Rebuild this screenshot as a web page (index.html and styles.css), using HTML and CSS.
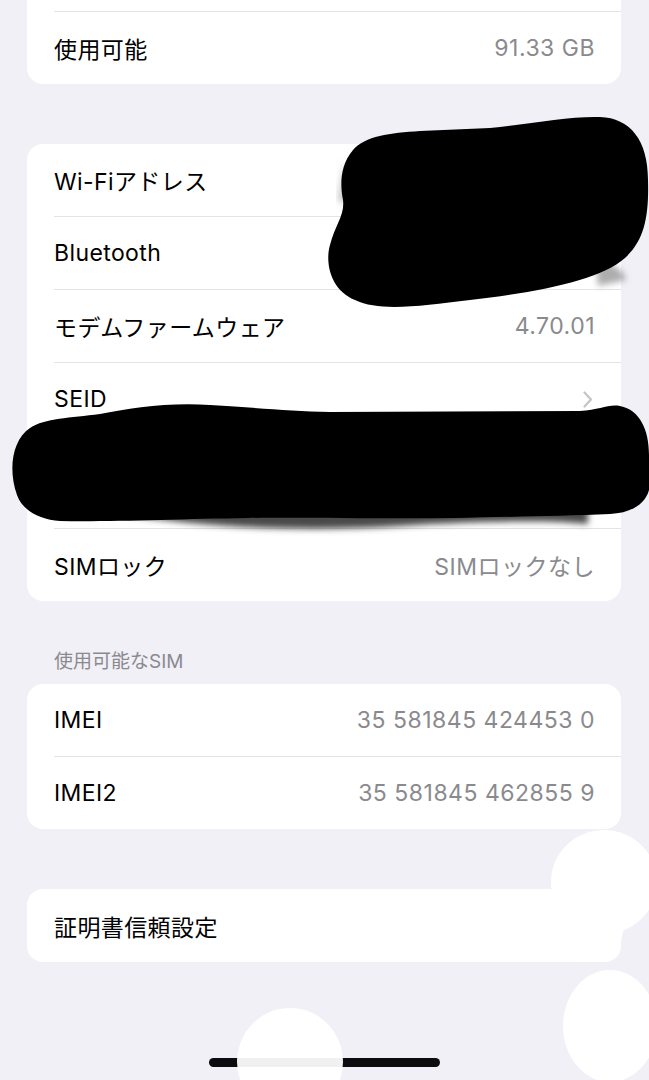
FILE: index.html
```html
<!DOCTYPE html>
<html lang="ja">
<head>
  <meta charset="UTF-8">
  <title>情報</title>
  <link rel="stylesheet" href="styles.css">
</head>
<body>

<div class="page">

  <div class="group group-top">
    <div class="row"></div>
    <div class="row">
      <span class="label">使用可能</span>
      <span class="value">91.33 GB</span>
    </div>
  </div>

  <div class="group">
    <div class="row">
      <span class="label">Wi-Fiアドレス</span>
      <span class="value">00:00:00:00:00:00</span>
    </div>
    <div class="row">
      <span class="label">Bluetooth</span>
      <span class="value">00:00:00:00:00:00</span>
    </div>
    <div class="row">
      <span class="label">モデムファームウェア</span>
      <span class="value">4.70.01</span>
    </div>
    <div class="row">
      <span class="label">SEID</span>
      <svg class="chevron" width="10" height="17" viewBox="0 0 10 17">
        <path d="M1.5 1.5 L8 8.5 L1.5 15.5" fill="none" stroke="#c4c4c8" stroke-width="2.2" stroke-linecap="round" stroke-linejoin="round"/>
      </svg>
    </div>
    <div class="row row-tall">
      <span class="label">EID</span>
      <span class="value small">00000000000000000000000000000000</span>
    </div>
    <div class="row">
      <span class="label">SIMロック</span>
      <span class="value">SIMロックなし</span>
    </div>
  </div>

  <div class="section-title">使用可能なSIM</div>
  <div class="group group-sim">
    <div class="row">
      <span class="label">IMEI</span>
      <span class="value">35 581845 424453 0</span>
    </div>
    <div class="row">
      <span class="label">IMEI2</span>
      <span class="value">35 581845 462855 9</span>
    </div>
  </div>

  <div class="group group-last">
    <div class="row">
      <span class="label">証明書信頼設定</span>
    </div>
  </div>

</div>

<div class="home-bar"></div>

<!-- 塗りつぶし・消し跡 -->
<svg class="marks" width="649" height="1080" viewBox="0 0 649 1080">
  <defs>
    <filter id="soft" x="-20%" y="-50%" width="140%" height="200%">
      <feGaussianBlur stdDeviation="3"/>
    </filter>
  </defs>
  <path d="M596,262 C612,262 624,270 626,280 L598,286 Z" fill="#777" fill-opacity="0.6" filter="url(#soft)"/>
  <path d="M344,160 L338,200 L346,205 Z" fill="#888" fill-opacity="0.5" filter="url(#soft)"/>
  <path d="M353,150 C365,136 390,133 420,131 L490,128 C530,124 570,116 600,117 C630,118 648,140 648,180 C649,215 645,240 625,258 C600,280 540,292 470,300 C420,306 380,312 355,300 C330,290 325,262 330,245 C335,225 345,215 343,200 C340,185 340,165 353,150 Z" fill="#000"/>

  <path d="M110,512 C200,528 300,532 400,526 C480,521 550,520 588,524 L588,508 L110,508 Z" fill="#4a4a4a" filter="url(#soft)"/>
  <path d="M17,495 C8,470 12,440 30,428 C45,418 70,418 100,414 C130,408 170,402 210,405 C260,408 290,411 330,412 L580,411 C600,410 608,404 620,406 C640,410 649,430 649,455 L649,490 C645,505 630,513 610,514 C560,516 500,517 455,518 C380,519 300,517 248,518 C180,519 110,522 60,521 C40,520 22,510 17,495 Z" fill="#000"/>

  <ellipse cx="604" cy="882" rx="53" ry="52" fill="#fff"/>
  <ellipse cx="610" cy="920" rx="14" ry="34" fill="#fff"/>
  <ellipse cx="610" cy="1026" rx="47" ry="56" fill="#fff"/>
  <ellipse cx="290" cy="1062" rx="53" ry="54" fill="#fff" fill-opacity="0.94"/>
</svg>

</body>
</html>
```

FILE: styles.css
```css
body {
  margin: 0;
  background: #f1f0f7;
  font-family: "Inter", "Noto Sans CJK JP", sans-serif;
  color: #000;
  height: 1080px;
  overflow: hidden;
}
.page {
  padding: 0 28px 0 27px;
}
.group {
  background: #fff;
  border-radius: 16px;
  margin-top: 60px;
  overflow: hidden;
}
.group-top {
  margin-top: -61px;
}
.group-sim {
  margin-top: 0;
}
.group-last .row {
  height: 73px;
}
.row {
  display: flex;
  align-items: center;
  justify-content: space-between;
  height: 72px;
  margin-left: 27px;
  padding-right: 26px;
}
.row + .row {
  border-top: 1px solid #e3e3e8;
}
.row-tall {
  height: 92px;
}
.label {
  font-size: 23px;
  letter-spacing: 0.4px;
}
.value {
  font-size: 23px;
  color: #8a8a8e;
  letter-spacing: 0.5px;
}
.value.small {
  font-size: 16px;
}
.chevron {
  margin-right: 2px;
}
.section-title {
  margin: 51px 0 12px 27px;
  font-size: 19px;
  line-height: 20px;
  color: #8a8a8e;
}
.home-bar {
  position: absolute;
  left: 209px;
  top: 1058px;
  width: 231px;
  height: 9px;
  border-radius: 5px;
  background: #0c0c0e;
}
.marks {
  position: absolute;
  top: 0;
  left: 0;
  pointer-events: none;
}
```
